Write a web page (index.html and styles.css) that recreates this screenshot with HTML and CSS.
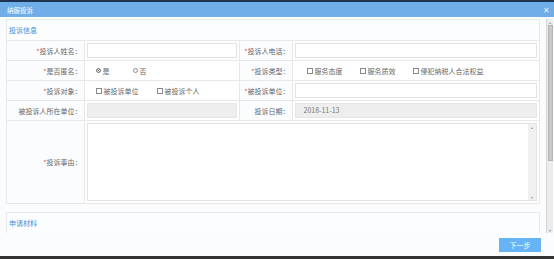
FILE: index.html
```html
<!DOCTYPE html>
<html lang="zh-CN">
<head>
  <meta charset="UTF-8">
  <title>纳服投诉</title>
  <link rel="stylesheet" href="styles.css">
</head>
<body>
  <div class="top-strip"></div>
  <div class="dialog">
    <div class="titlebar">
      <span class="title">纳服投诉</span>
      <span class="close">&#x2715;</span>
    </div>

    <div class="body">
      <div class="scroll-area">
        <!-- 投诉信息 -->
        <div class="panel">
          <div class="panel-head">投诉信息</div>
          <table class="form-table">
            <colgroup>
              <col class="c-label1">
              <col class="c-value1">
              <col class="c-label2">
              <col class="c-value2">
            </colgroup>
            <tr>
              <td class="label"><i>*</i>投诉人姓名：</td>
              <td><div class="field"></div></td>
              <td class="label"><i>*</i>投诉人电话：</td>
              <td><div class="field"></div></td>
            </tr>
            <tr>
              <td class="label"><i>*</i>是否匿名：</td>
              <td>
                <div class="options radios">
                  <span class="opt"><span class="radio checked"></span>是</span>
                  <span class="opt"><span class="radio"></span>否</span>
                </div>
              </td>
              <td class="label"><i>*</i>投诉类型：</td>
              <td>
                <div class="options types">
                  <span class="opt"><span class="check"></span>服务态度</span>
                  <span class="opt"><span class="check"></span>服务质效</span>
                  <span class="opt"><span class="check"></span>侵犯纳税人合法权益</span>
                </div>
              </td>
            </tr>
            <tr>
              <td class="label"><i>*</i>投诉对象：</td>
              <td>
                <div class="options targets">
                  <span class="opt"><span class="check"></span>被投诉单位</span>
                  <span class="opt"><span class="check"></span>被投诉个人</span>
                </div>
              </td>
              <td class="label"><i>*</i>被投诉单位：</td>
              <td><div class="field"></div></td>
            </tr>
            <tr>
              <td class="label">被投诉人所在单位：</td>
              <td><div class="field disabled"></div></td>
              <td class="label">投诉日期：</td>
              <td><div class="field disabled">2018-11-13</div></td>
            </tr>
            <tr class="tall">
              <td class="label"><i>*</i>投诉事由：</td>
              <td colspan="3">
                <div class="textarea">
                  <div class="ta-scroll">
                    <span class="arrow">&#9652;</span>
                    <span class="arrow">&#9662;</span>
                  </div>
                </div>
              </td>
            </tr>
          </table>
        </div>

        <!-- 申请材料 -->
        <div class="panel second">
          <div class="panel-head">申请材料</div>
        </div>
        <div class="panel-edge"></div>
      </div>

      <div class="vscroll">
        <span class="arrow">&#9652;</span>
        <div class="thumb"></div>
        <span class="arrow end">&#9662;</span>
      </div>
    </div>

    <div class="footer">
      <button class="next-btn">下一步</button>
    </div>
  </div>
  <div class="bottom-strip"></div>
</body>
</html>
```

FILE: styles.css
```css
* {
  box-sizing: border-box;
}

body {
  margin: 0;
  width: 554px;
  height: 259px;
  overflow: hidden;
  background: #2b2f33;
  font-family: "Noto Sans CJK SC", "Liberation Sans", sans-serif;
  font-size: 7px;
  color: #666;
}

.top-strip {
  height: 2px;
  background: #1d3550;
}

.dialog {
  height: 254px;
  background: #fbfcfd;
  display: flex;
  flex-direction: column;
}

.titlebar {
  height: 15px;
  background: #70aeea;
  color: #fff;
  display: flex;
  align-items: center;
  justify-content: space-between;
  padding: 0 4px 0 7px;
}

.title {
  font-size: 6.5px;
}

.close {
  font-size: 8px;
  color: #e8f2fc;
}

.body {
  height: 216px;
  display: flex;
}

.scroll-area {
  width: 546px;
  padding: 2px 6px 0 6px;
  overflow: hidden;
}

.panel {
  border: 1px solid #e8e8e8;
  background: #fff;
}

.panel-head {
  height: 20px;
  line-height: 20px;
  padding-left: 2px;
  color: #3d8ed6;
  background: #fbfdfe;
}

.form-table {
  width: 100%;
  border-collapse: collapse;
  table-layout: fixed;
}

.c-label1 { width: 77px; }
.c-value1 { width: 155px; }
.c-label2 { width: 53px; }

.form-table td {
  border: 1px solid #e8e8e8;
  height: 20px;
  padding: 0 2px;
}

.form-table td:first-child {
  border-left: none;
}

.form-table td:last-child {
  border-right: none;
}

.form-table tr:last-child td {
  border-bottom: none;
}

.label {
  text-align: right;
  white-space: nowrap;
  background: #fbfcfd;
  padding-right: 1px;
}

.label i {
  font-style: normal;
  color: #e5534b;
}

.field {
  height: 15px;
  border: 1px solid #e2e2e2;
  background: #fff;
  line-height: 13px;
  padding-left: 8px;
  color: #777;
}

.field.disabled {
  background: #eeeeee;
  border-color: #e6e6e6;
}

.options {
  display: flex;
  align-items: center;
  white-space: nowrap;
}

.opt {
  display: flex;
  align-items: center;
  gap: 2px;
}

.radios {
  padding-left: 9px;
  gap: 23px;
}

.types {
  padding-left: 12px;
  gap: 17px;
}

.targets {
  padding-left: 9px;
  gap: 18px;
}

.radio {
  width: 5px;
  height: 5px;
  border-radius: 50%;
  border: 1px solid #888;
  background: #fff;
}

.radio.checked {
  background: #333;
  box-shadow: inset 0 0 0 1px #fff;
}

.check {
  width: 6px;
  height: 6px;
  border: 1px solid #888;
  background: #fff;
}

.form-table tr.tall td {
  height: 82px;
}

.textarea {
  height: 78px;
  border: 1px solid #e2e2e2;
  background: #fff;
  display: flex;
  justify-content: flex-end;
}

.ta-scroll {
  width: 8px;
  background: #f0f0f0;
  display: flex;
  flex-direction: column;
  justify-content: space-between;
  align-items: center;
}

.arrow {
  font-size: 4px;
  line-height: 6px;
  color: #999;
}

.panel.second {
  margin-top: 8px;
  height: 22px;
}

.panel-edge {
  margin-top: 1px;
  height: 4px;
  border-top: 1px solid #e8e8e8;
  border-left: 1px solid #e8e8e8;
  border-right: 1px solid #e8e8e8;
  background: #fff;
}

.vscroll {
  width: 7px;
  margin-top: 2px;
  background: #ececec;
  border-left: 1px solid #d6d6d6;
  display: flex;
  flex-direction: column;
  align-items: center;
}

.thumb {
  width: 5px;
  height: 136px;
  background: #c9c9c9;
  border: 1px solid #b5b5b5;
}

.vscroll .end {
  margin-top: auto;
}

.footer {
  flex: 1;
  display: flex;
  justify-content: flex-end;
  align-items: center;
  padding-right: 13px;
  background: #fbfcfd;
}

.next-btn {
  width: 42px;
  height: 14px;
  border: none;
  background: #66b4f6;
  color: #fff;
  font-family: inherit;
  font-size: 7px;
  padding: 0;
}

.bottom-strip {
  height: 3px;
  background: #333;
}
```
